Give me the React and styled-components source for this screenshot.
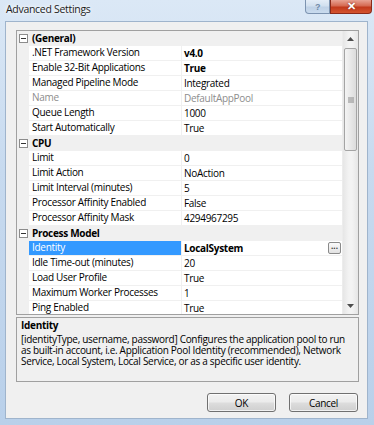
import React from "react";
import styled, { createGlobalStyle } from "styled-components";

const GlobalStyle = createGlobalStyle`
  html, body {
    margin: 0;
    padding: 0;
    background: #cfdff1;
  }
  * {
    box-sizing: border-box;
  }
`;

const Window = styled.div`
  width: 374px;
  height: 425px;
  overflow: hidden;
  display: flex;
  flex-direction: column;
  font-family: "Open Sans", "Noto Sans", sans-serif;
  font-size: 10px;
  letter-spacing: -0.3px;
  color: #000;
  background: linear-gradient(180deg, #dbe8f6 0%, #c7daef 40%, #b9d0ea 100%);
`;

const TitleBar = styled.div`
  height: 21px;
  display: flex;
  align-items: flex-start;
  justify-content: space-between;
  padding-left: 6px;
`;

const Title = styled.div`
  margin-top: 2px;
  font-size: 10.5px;
  color: #1b1b1b;
  text-shadow: 0 0 6px #fff, 0 0 3px #fff;
`;

const Controls = styled.div`
  display: flex;
  margin-right: 2px;
`;

const CaptionButton = styled.div`
  width: ${(p) => p.$w}px;
  height: 14px;
  display: flex;
  align-items: center;
  justify-content: center;
  font-family: "Liberation Sans", sans-serif;
  font-weight: bold;
  font-size: ${(p) => (p.$close ? 11 : 9)}px;
  color: ${(p) => (p.$close ? "#fff" : "#6f8aa8")};
  border: 1px solid ${(p) => (p.$close ? "#8a2a1a" : "#7c93b0")};
  border-top: none;
  border-radius: ${(p) => (p.$close ? "0 0 4px 0" : "0 0 0 4px")};
  background: ${(p) =>
    p.$close
      ? "linear-gradient(180deg, #e8a293 0%, #d56a52 45%, #c2391c 55%, #d4542f 100%)"
      : "linear-gradient(180deg, #e4edf7 0%, #d2e0ef 45%, #bfd1e6 55%, #c9dbee 100%)"};
  text-shadow: ${(p) => (p.$close ? "0 0 2px #7a1a0a" : "none")};
`;

const Client = styled.div`
  flex: 1;
  margin: 0 6px 6px 5px;
  background: #f0f0f0;
  display: flex;
  flex-direction: column;
  padding: 8px 8px 0 10px;
  border: 1px solid #9fb4cc;
`;

const Grid = styled.div`
  height: 285px;
  border: 1px solid #a0a0a0;
  background: #fff;
  display: flex;
  overflow: hidden;
`;

const Rows = styled.div`
  flex: 1;
  overflow: hidden;
`;

const Row = styled.div`
  height: 15px;
  display: grid;
  grid-template-columns: 12px 153px 1fr;
  align-items: stretch;
  line-height: 13px;
`;

const Gutter = styled.div`
  background: #f0f0f0;
  display: flex;
  align-items: center;
  justify-content: center;
`;

const NameCell = styled.div`
  padding-left: 3px;
  white-space: nowrap;
  overflow: hidden;
  border-right: 1px solid #f0f0f0;
  border-bottom: 1px solid #f0f0f0;
  color: ${(p) => (p.$selected ? "#fff" : p.$muted ? "#8d8d8d" : "#000")};
  background: ${(p) => (p.$selected ? "#3399ff" : "#fff")};
`;

const ValueCell = styled.div`
  padding-left: 2px;
  padding-right: 1px;
  white-space: nowrap;
  overflow: hidden;
  border-bottom: 1px solid #f0f0f0;
  display: flex;
  justify-content: space-between;
  align-items: center;
  font-weight: ${(p) => (p.$bold ? "bold" : "normal")};
  color: ${(p) => (p.$muted ? "#8d8d8d" : "#000")};
`;

const CategoryRow = styled.div`
  height: 15px;
  display: flex;
  align-items: center;
  background: #f0f0f0;
  line-height: 13px;
`;

const CategoryGutter = styled.div`
  width: 12px;
  display: flex;
  align-items: center;
  justify-content: center;
`;

const CategoryName = styled.div`
  padding-left: 3px;
  font-weight: bold;
`;

const EllipsisButton = styled.div`
  width: 13px;
  height: 12px;
  border: 1px solid #8a8a8a;
  border-radius: 2px;
  background: linear-gradient(180deg, #fafafa, #e2e2e2);
  font-size: 8px;
  line-height: 6px;
  letter-spacing: 0;
  text-align: center;
  color: #333;
`;

const Scrollbar = styled.div`
  width: 16px;
  display: flex;
  flex-direction: column;
  background: linear-gradient(90deg, #e6e6e6, #f3f3f3 40%, #f3f3f3 60%, #e6e6e6);
  border-left: 1px solid #ececec;
`;

const ArrowButton = styled.div`
  height: 16px;
  display: flex;
  align-items: center;
  justify-content: center;
`;

const Track = styled.div`
  flex: 1;
  padding-top: 1px;
`;

const Thumb = styled.div`
  height: 103px;
  margin: 0 1px;
  border: 1px solid #a4a4a4;
  border-radius: 2px;
  background: linear-gradient(90deg, #f4f4f4, #e8e8e8 50%, #dcdcdc);
  display: flex;
  align-items: center;
  justify-content: center;
`;

const Description = styled.div`
  margin-top: 2px;
  height: 65px;
  border: 1px solid #a0a0a0;
  padding: 2px 4px;
  font-size: 10px;
  line-height: 11px;
`;

const DescTitle = styled.div`
  font-weight: bold;
  margin-bottom: 3px;
`;

const ButtonRow = styled.div`
  display: flex;
  justify-content: flex-end;
  gap: 13px;
  margin-top: 11px;
  padding-right: 1px;
`;

const Button = styled.div`
  width: 69px;
  height: 19px;
  border: 1px solid #707070;
  border-radius: 3px;
  display: flex;
  align-items: center;
  justify-content: center;
  font-size: 10px;
  background: linear-gradient(180deg, #f2f2f2 0%, #ebebeb 48%, #dddddd 52%, #cfcfcf 100%);
  box-shadow: inset 0 0 0 1px rgba(255, 255, 255, 0.7);
`;

const Collapse = () => (
  <svg width="9" height="9" viewBox="0 0 9 9">
    <rect x="0.5" y="0.5" width="8" height="8" fill="#fff" stroke="#8c8c8c" />
    <line x1="2" y1="4.5" x2="7" y2="4.5" stroke="#333" />
  </svg>
);

const Arrow = ({ down }) => (
  <svg width="7" height="4" viewBox="0 0 7 4">
    <polygon points={down ? "0,0 7,0 3.5,4" : "0,4 7,4 3.5,0"} fill="#4d4d4d" />
  </svg>
);

const Grip = () => (
  <svg width="6" height="6" viewBox="0 0 6 6">
    <line x1="0" y1="1" x2="6" y2="1" stroke="#8a8a8a" />
    <line x1="0" y1="3" x2="6" y2="3" stroke="#8a8a8a" />
    <line x1="0" y1="5" x2="6" y2="5" stroke="#8a8a8a" />
  </svg>
);

const sections = [
  {
    name: "(General)",
    items: [
      { name: ".NET Framework Version", value: "v4.0", bold: true },
      { name: "Enable 32-Bit Applications", value: "True", bold: true },
      { name: "Managed Pipeline Mode", value: "Integrated" },
      { name: "Name", value: "DefaultAppPool", muted: true },
      { name: "Queue Length", value: "1000" },
      { name: "Start Automatically", value: "True" },
    ],
  },
  {
    name: "CPU",
    items: [
      { name: "Limit", value: "0" },
      { name: "Limit Action", value: "NoAction" },
      { name: "Limit Interval (minutes)", value: "5" },
      { name: "Processor Affinity Enabled", value: "False" },
      { name: "Processor Affinity Mask", value: "4294967295" },
    ],
  },
  {
    name: "Process Model",
    items: [
      { name: "Identity", value: "LocalSystem", bold: true, selected: true, editor: true },
      { name: "Idle Time-out (minutes)", value: "20" },
      { name: "Load User Profile", value: "True" },
      { name: "Maximum Worker Processes", value: "1" },
      { name: "Ping Enabled", value: "True" },
    ],
  },
];

export default function App() {
  return (
    <>
      <GlobalStyle />
      <Window>
        <TitleBar>
          <Title>Advanced Settings</Title>
          <Controls>
            <CaptionButton $w={25}>?</CaptionButton>
            <CaptionButton $w={42} $close>
              ✕
            </CaptionButton>
          </Controls>
        </TitleBar>
        <Client>
          <Grid>
            <Rows>
              {sections.map((s) => (
                <React.Fragment key={s.name}>
                  <CategoryRow>
                    <CategoryGutter>
                      <Collapse />
                    </CategoryGutter>
                    <CategoryName>{s.name}</CategoryName>
                  </CategoryRow>
                  {s.items.map((it) => (
                    <Row key={it.name}>
                      <Gutter />
                      <NameCell $selected={it.selected} $muted={it.muted}>
                        {it.name}
                      </NameCell>
                      <ValueCell $bold={it.bold} $muted={it.muted}>
                        <span>{it.value}</span>
                        {it.editor && <EllipsisButton>...</EllipsisButton>}
                      </ValueCell>
                    </Row>
                  ))}
                </React.Fragment>
              ))}
            </Rows>
            <Scrollbar>
              <ArrowButton>
                <Arrow />
              </ArrowButton>
              <Track>
                <Thumb>
                  <Grip />
                </Thumb>
              </Track>
              <ArrowButton>
                <Arrow down />
              </ArrowButton>
            </Scrollbar>
          </Grid>
          <Description>
            <DescTitle>Identity</DescTitle>
            [identityType, username, password] Configures the application pool to run as
            built-in account, i.e. Application Pool Identity (recommended), Network
            Service, Local System, Local Service, or as a specific user identity.
          </Description>
          <ButtonRow>
            <Button>OK</Button>
            <Button>Cancel</Button>
          </ButtonRow>
        </Client>
      </Window>
    </>
  );
}
